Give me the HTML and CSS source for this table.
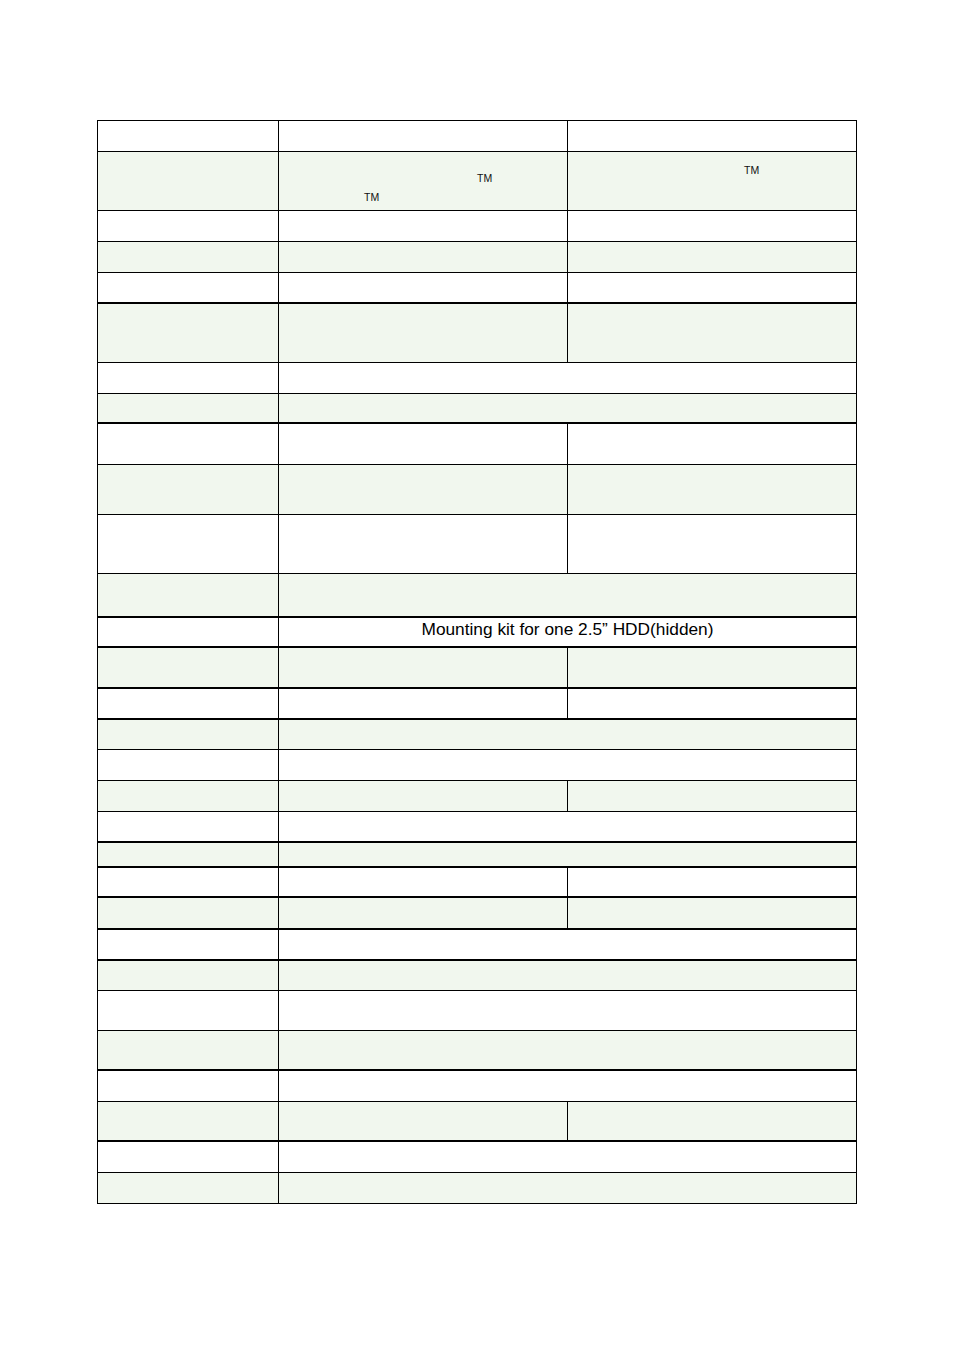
FILE: index.html
```html
<!DOCTYPE html>
<html lang="en">
<head>
<meta charset="utf-8">
<title>Specification table</title>
<link rel="stylesheet" href="styles.css">
</head>
<body>
<div class="sheet">
  <div class="spec">
    <div class="row h31"><div class="c1"></div><div class="c2"></div><div class="c3"></div></div>
    <div class="row h59 g">
      <div class="c1"></div>
      <div class="c2 tm-cell tm-cell-a">
        <div class="tm-line"><span class="tm tm-a">TM</span></div>
        <div class="tm-line"><span class="tm tm-b">TM</span></div>
      </div>
      <div class="c3 tm-cell tm-cell-b">
        <div class="tm-line"><span class="tm tm-c">TM</span></div>
      </div>
    </div>
    <div class="row h31"><div class="c1"></div><div class="c2"></div><div class="c3"></div></div>
    <div class="row h31 g"><div class="c1"></div><div class="c2"></div><div class="c3"></div></div>
    <div class="row h31 thick"><div class="c1"></div><div class="c2"></div><div class="c3"></div></div>
    <div class="row h59 g"><div class="c1"></div><div class="c2"></div><div class="c3"></div></div>
    <div class="row h31"><div class="c1"></div><div class="c23"></div></div>
    <div class="row h30 g thick"><div class="c1"></div><div class="c23"></div></div>
    <div class="row h41"><div class="c1"></div><div class="c2"></div><div class="c3"></div></div>
    <div class="row h50 g"><div class="c1"></div><div class="c2"></div><div class="c3"></div></div>
    <div class="row h59"><div class="c1"></div><div class="c2"></div><div class="c3"></div></div>
    <div class="row h44 g thick"><div class="c1"></div><div class="c23"></div></div>
    <div class="row h30 thick"><div class="c1"></div><div class="c23 note">Mounting kit for one 2.5” HDD(hidden)</div></div>
    <div class="row h41 g thick"><div class="c1"></div><div class="c2"></div><div class="c3"></div></div>
    <div class="row h31 thick"><div class="c1"></div><div class="c2"></div><div class="c3"></div></div>
    <div class="row h30 g"><div class="c1"></div><div class="c23"></div></div>
    <div class="row h31"><div class="c1"></div><div class="c23"></div></div>
    <div class="row h31 g"><div class="c1"></div><div class="c2"></div><div class="c3"></div></div>
    <div class="row h31 thick"><div class="c1"></div><div class="c23"></div></div>
    <div class="row h25 g thick"><div class="c1"></div><div class="c23"></div></div>
    <div class="row h30 thick"><div class="c1"></div><div class="c2"></div><div class="c3"></div></div>
    <div class="row h32 g thick"><div class="c1"></div><div class="c2"></div><div class="c3"></div></div>
    <div class="row h31 thick"><div class="c1"></div><div class="c23"></div></div>
    <div class="row h30 g"><div class="c1"></div><div class="c23"></div></div>
    <div class="row h40"><div class="c1"></div><div class="c23"></div></div>
    <div class="row h40 g thick"><div class="c1"></div><div class="c23"></div></div>
    <div class="row h31"><div class="c1"></div><div class="c23"></div></div>
    <div class="row h40 g thick"><div class="c1"></div><div class="c2"></div><div class="c3"></div></div>
    <div class="row h31"><div class="c1"></div><div class="c23"></div></div>
    <div class="row h31 g"><div class="c1"></div><div class="c23"></div></div>
  </div>
</div>
</body>
</html>
```

FILE: styles.css
```css
html, body {
  margin: 0;
  padding: 0;
  background: #ffffff;
}

body {
  font-family: "Liberation Sans", Arial, sans-serif;
  color: #000000;
}

.sheet {
  padding: 120px 0 0 97px;
}

.spec {
  width: 760px;
  box-sizing: border-box;
  border-top: 1px solid #000;
  border-left: 1px solid #000;
  border-right: 1px solid #000;
}

.row {
  display: flex;
  box-sizing: border-box;
  border-bottom: 1px solid #000;
  background: #ffffff;
}

.row.g {
  background: #f1f7ee;
}

.row.thick {
  border-bottom-width: 2px;
}

.h25 { height: 25px; }
.h30 { height: 30px; }
.h31 { height: 31px; }
.h32 { height: 32px; }
.h40 { height: 40px; }
.h41 { height: 41px; }
.h44 { height: 44px; }
.h50 { height: 50px; }
.h59 { height: 59px; }

.c1 {
  width: 181px;
  flex: none;
  box-sizing: border-box;
  border-right: 1px solid #000;
}

.c2 {
  width: 289px;
  flex: none;
  box-sizing: border-box;
  border-right: 1px solid #000;
}

.c3 {
  flex: 1;
}

.c23 {
  flex: 1;
}

.tm-cell-a {
  padding-top: 15px;
}

.tm-cell-b {
  padding-top: 7px;
}

.tm-line {
  height: 19px;
  line-height: 19px;
}

.tm {
  font-size: 10.5px;
  color: #111111;
}

.tm-a { margin-left: 198px; }
.tm-b { margin-left: 85px; }
.tm-c { margin-left: 176px; }

.note {
  text-align: center;
  font-size: 17.3px;
  line-height: 18px;
  padding-top: 2px;
  box-sizing: border-box;
}
```
